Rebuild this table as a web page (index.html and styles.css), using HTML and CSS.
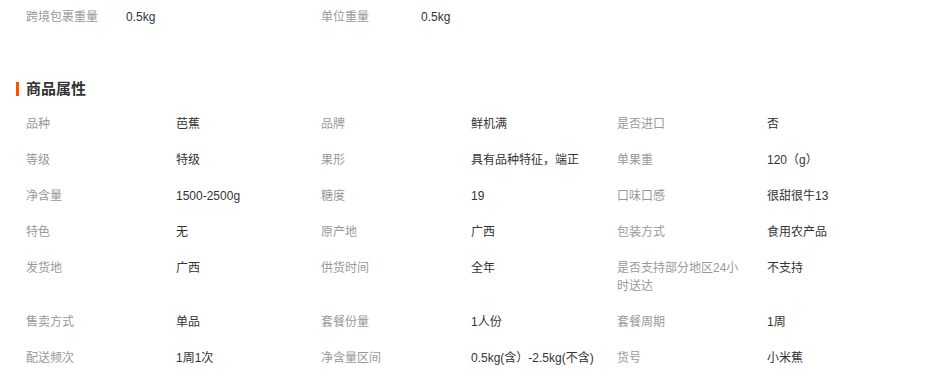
FILE: index.html
```html
<!DOCTYPE html>
<html lang="zh">
<head>
<meta charset="utf-8">
<title>商品属性</title>
<link rel="stylesheet" href="styles.css">
</head>
<body>
<div class="page">
  <div class="logistics">
    <div class="pair"><span class="lg-label">跨境包裹重量</span><span class="lg-value">0.5kg</span></div>
    <div class="pair"><span class="lg-label">单位重量</span><span class="lg-value">0.5kg</span></div>
  </div>

  <h3 class="section-title">商品属性</h3>

  <div class="attrs">
    <div class="label">品种</div><div class="value">芭蕉</div>
    <div class="label">品牌</div><div class="value">鲜机满</div>
    <div class="label">是否进口</div><div class="value">否</div>

    <div class="label">等级</div><div class="value">特级</div>
    <div class="label">果形</div><div class="value">具有品种特征，端正</div>
    <div class="label">单果重</div><div class="value">120（g）</div>

    <div class="label">净含量</div><div class="value">1500-2500g</div>
    <div class="label">糖度</div><div class="value">19</div>
    <div class="label">口味口感</div><div class="value">很甜很牛13</div>

    <div class="label">特色</div><div class="value">无</div>
    <div class="label">原产地</div><div class="value">广西</div>
    <div class="label">包装方式</div><div class="value">食用农产品</div>

    <div class="label">发货地</div><div class="value">广西</div>
    <div class="label">供货时间</div><div class="value">全年</div>
    <div class="label">是否支持部分地区24小时送达</div><div class="value">不支持</div>

    <div class="label">售卖方式</div><div class="value">单品</div>
    <div class="label">套餐份量</div><div class="value">1人份</div>
    <div class="label">套餐周期</div><div class="value">1周</div>

    <div class="label">配送频次</div><div class="value">1周1次</div>
    <div class="label">净含量区间</div><div class="value">0.5kg(含）-2.5kg(不含)</div>
    <div class="label">货号</div><div class="value">小米蕉</div>
  </div>
</div>
</body>
</html>
```

FILE: styles.css
```css
html, body {
  margin: 0;
  padding: 0;
  background: #fff;
}

body {
  font-family: "Liberation Sans", "Noto Sans CJK SC", sans-serif;
  font-size: 12px;
  line-height: 18px;
  color: #333;
}

.page {
  padding: 8px 0 0 26px;
}

.logistics {
  display: flex;
}

.pair {
  display: flex;
  width: 295px;
}

.lg-label {
  width: 100px;
  color: #999;
}

.lg-value {
  color: #333;
}

.section-title {
  position: relative;
  margin: 54px 0 8px 0;
  font-size: 15px;
  line-height: 18px;
  font-weight: bold;
  color: #333;
}

.section-title::before {
  content: "";
  position: absolute;
  left: -10px;
  top: 2px;
  width: 3px;
  height: 14px;
  background: #ff5000;
}

.attrs {
  display: grid;
  grid-template-columns: 150px 145px 150px 146px 150px 1fr;
}

.label,
.value {
  padding: 9px 0;
}

.label {
  color: #999;
  padding-right: 20px;
}

.value {
  color: #333;
}
```
